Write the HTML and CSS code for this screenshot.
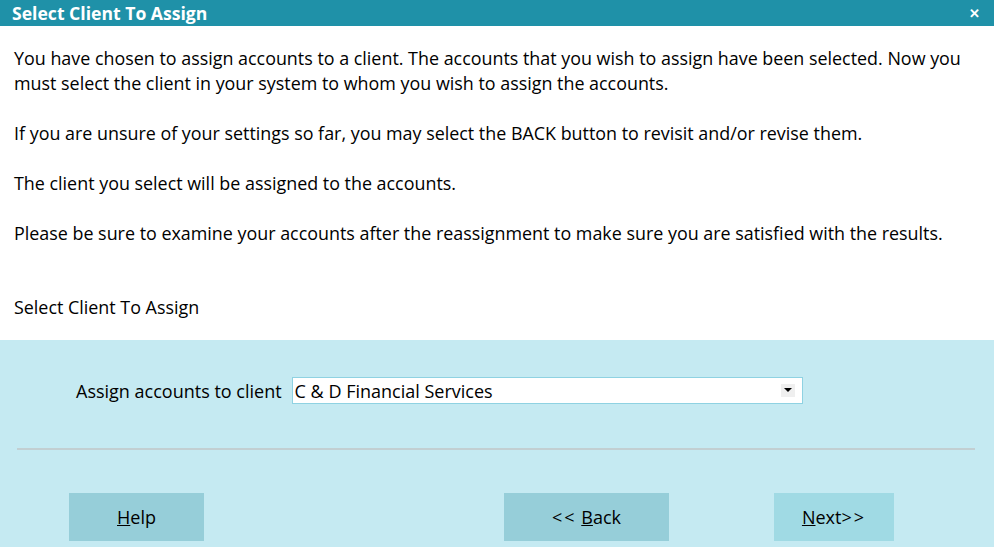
FILE: index.html
```html
<!DOCTYPE html>
<html lang="en">
<head>
  <meta charset="UTF-8">
  <title>Select Client To Assign</title>
  <link rel="stylesheet" href="styles.css">
</head>
<body>

  <div class="dialog">
    <div class="titlebar">
      <span class="title">Select Client To Assign</span>
      <span class="close">&#x2715;</span>
    </div>

    <div class="intro">
      <p>You have chosen to assign accounts to a client. The accounts that you wish to assign have been selected. Now you must select the client in your system to whom you wish to assign the accounts.</p>
      <p>If you are unsure of your settings so far, you may select the BACK button to revisit and/or revise them.</p>
      <p>The client you select will be assigned to the accounts.</p>
      <p>Please be sure to examine your accounts after the reassignment to make sure you are satisfied with the results.</p>
      <p class="section-label">Select Client To Assign</p>
    </div>

    <div class="panel">
      <div class="client-row">
        <label for="client">Assign accounts to client</label>
        <div class="select-box">
          <span id="client">C &amp; D Financial Services</span>
          <span class="arrow"></span>
        </div>
      </div>

      <hr class="divider">

      <div class="buttons">
        <button class="btn btn-help"><u>H</u>elp</button>
        <button class="btn btn-back"><span class="chev">&lt;&lt;</span> <u>B</u>ack</button>
        <button class="btn btn-next"><u>N</u>ext<span class="chev">&gt;&gt;</span></button>
      </div>
    </div>
  </div>

</body>
</html>
```

FILE: styles.css
```css
body {
  margin: 0;
  font-family: "Open Sans", "Noto Sans", sans-serif;
  color: #000;
  background: #fff;
}
.dialog {
  width: 994px;
  height: 547px;
  display: flex;
  flex-direction: column;
  overflow: hidden;
}
.titlebar {
  height: 26px;
  background: #1f91a8;
  color: #fff;
  display: flex;
  align-items: center;
  justify-content: space-between;
  padding: 0 14px 0 12px;
  flex-shrink: 0;
}
.title {
  font-weight: bold;
  font-size: 17.6px;
}
.close {
  font-size: 13px;
  font-weight: bold;
}
.intro {
  padding: 20px 14px 0 14px;
  height: 314px;
  box-sizing: border-box;
  flex-shrink: 0;
  font-size: 17.9px;
  line-height: 25px;
}
.intro p {
  margin: 0 0 25px 0;
}
.intro .section-label {
  margin-top: 49px;
}
.panel {
  flex: 1;
  background: #c5eaf2;
  padding: 37px 17px 0 17px;
}
.client-row {
  display: flex;
  align-items: center;
  padding-left: 59px;
  font-size: 18px;
}
.client-row label {
  margin-right: 10px;
}
.select-box {
  width: 511px;
  height: 27px;
  box-sizing: border-box;
  background: #fff;
  border: 1px solid #8fd2e2;
  display: flex;
  align-items: center;
  justify-content: space-between;
  padding: 0 7px 0 2px;
}
.arrow {
  width: 14px;
  height: 13px;
  background: #efefef;
  position: relative;
}
.arrow::after {
  content: "";
  position: absolute;
  left: 3px;
  top: 4px;
  border-left: 4px solid transparent;
  border-right: 4px solid transparent;
  border-top: 4px solid #000;
}
.divider {
  border: none;
  border-top: 2px solid #c2cfd2;
  margin: 44px 0 0 0;
  width: 958px;
}
.buttons {
  display: flex;
  margin-top: 43px;
  padding-left: 52px;
}
.btn {
  height: 48px;
  border: none;
  font-family: inherit;
  font-size: 18px;
  color: #000;
  background: #96ced9;
}
.chev {
  letter-spacing: 2px;
}
.btn-help {
  width: 135px;
}
.btn-back {
  width: 165px;
  margin-left: 300px;
}
.btn-next {
  width: 120px;
  margin-left: 105px;
  background: #a0dae4;
}
```
